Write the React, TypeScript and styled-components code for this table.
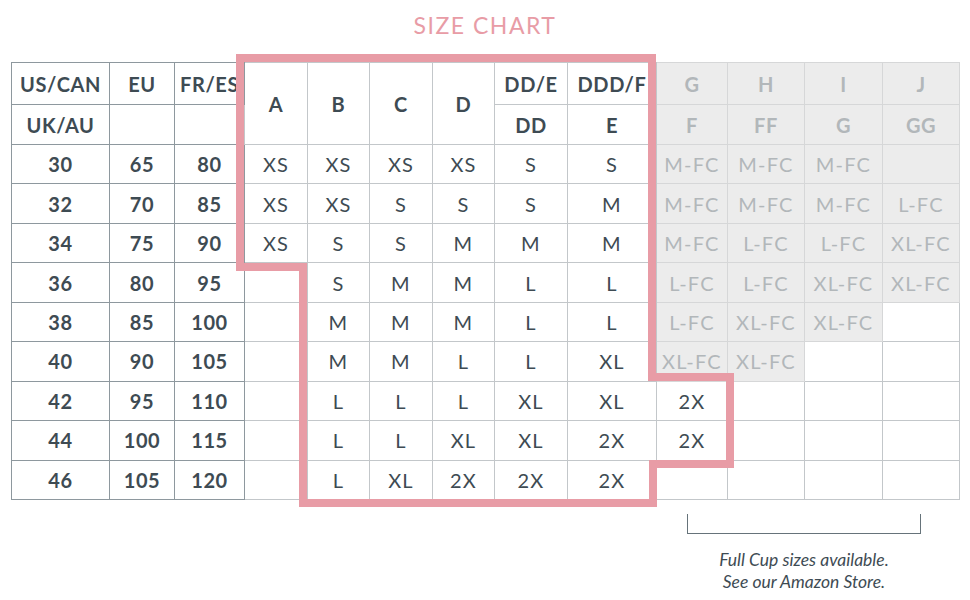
import React from "react";
import styled, { createGlobalStyle } from "styled-components";

const GlobalStyle = createGlobalStyle`
  html, body {
    margin: 0;
    padding: 0;
    background: #ffffff;
    font-family: "Lato", "Noto Sans", sans-serif;
    color: #3e4b53;
  }
`;

type Tone = "key" | "cup" | "full" | "blank";

const widths = [98, 65, 70, 63, 62, 63, 62, 73, 89, 71, 77, 78, 77];

const head1 = ["US/CAN", "EU", "FR/ES"];
const cupHead = ["A", "B", "C", "D"];
const head1b = ["DD/E", "DDD/F"];
const head2b = ["DD", "E"];
const fullHead1 = ["G", "H", "I", "J"];
const fullHead2 = ["F", "FF", "G", "GG"];

// band, eu, fr, A..DDD/F, G..J, and how many full cup cells are shaded
const rows: { key: string[]; cup: string[]; full: string[]; shaded: number }[] = [
  { key: ["30", "65", "80"], cup: ["XS", "XS", "XS", "XS", "S", "S"], full: ["M-FC", "M-FC", "M-FC", ""], shaded: 4 },
  { key: ["32", "70", "85"], cup: ["XS", "XS", "S", "S", "S", "M"], full: ["M-FC", "M-FC", "M-FC", "L-FC"], shaded: 4 },
  { key: ["34", "75", "90"], cup: ["XS", "S", "S", "M", "M", "M"], full: ["M-FC", "L-FC", "L-FC", "XL-FC"], shaded: 4 },
  { key: ["36", "80", "95"], cup: ["", "S", "M", "M", "L", "L"], full: ["L-FC", "L-FC", "XL-FC", "XL-FC"], shaded: 4 },
  { key: ["38", "85", "100"], cup: ["", "M", "M", "M", "L", "L"], full: ["L-FC", "XL-FC", "XL-FC", ""], shaded: 3 },
  { key: ["40", "90", "105"], cup: ["", "M", "M", "L", "L", "XL"], full: ["XL-FC", "XL-FC", "", ""], shaded: 2 },
  { key: ["42", "95", "110"], cup: ["", "L", "L", "L", "XL", "XL"], full: ["2X", "", "", ""], shaded: 0 },
  { key: ["44", "100", "115"], cup: ["", "L", "L", "XL", "XL", "2X"], full: ["2X", "", "", ""], shaded: 0 },
  { key: ["46", "105", "120"], cup: ["", "L", "XL", "2X", "2X", "2X"], full: ["", "", "", ""], shaded: 0 },
];

const App = () => {
  return (
    <Page>
      <GlobalStyle />
      <Title>Size Chart</Title>
      <ChartWrap>
        <Chart>
          <colgroup>
            {widths.map((w, i) => (
              <col key={i} style={{ width: w }} />
            ))}
          </colgroup>
          <thead>
            <HeadRow $h={42}>
              {head1.map((t) => (
                <HeadCell key={t} $tone="key">{t}</HeadCell>
              ))}
              {cupHead.map((t) => (
                <HeadCell key={t} $tone="cup" rowSpan={2}>{t}</HeadCell>
              ))}
              {head1b.map((t) => (
                <HeadCell key={t} $tone="cup">{t}</HeadCell>
              ))}
              {fullHead1.map((t) => (
                <HeadCell key={t} $tone="full">{t}</HeadCell>
              ))}
            </HeadRow>
            <HeadRow $h={40}>
              <HeadCell $tone="key">UK/AU</HeadCell>
              <HeadCell $tone="key" />
              <HeadCell $tone="key" />
              {head2b.map((t) => (
                <HeadCell key={t} $tone="cup">{t}</HeadCell>
              ))}
              {fullHead2.map((t, i) => (
                <HeadCell key={i} $tone="full">{t}</HeadCell>
              ))}
            </HeadRow>
          </thead>
          <tbody>
            {rows.map((r) => (
              <BodyRow key={r.key[0]}>
                {r.key.map((t, i) => (
                  <KeyCell key={i}>{t}</KeyCell>
                ))}
                {r.cup.map((t, i) => (
                  <SizeCell key={i} $tone="cup">{t}</SizeCell>
                ))}
                {r.full.map((t, i) => (
                  <SizeCell key={i} $tone={i < r.shaded ? "full" : t ? "cup" : "blank"}>
                    {t}
                  </SizeCell>
                ))}
              </BodyRow>
            ))}
          </tbody>
        </Chart>
        <Outline width="948" height="437" viewBox="0 0 948 437">
          <polygon
            points="229,-4 641,-4 641,315 719,315 719,402 642,402 642,441 292,441 292,205 229,205"
            fill="none"
            stroke="#e89ca6"
            strokeWidth="8"
            strokeLinejoin="miter"
          />
        </Outline>
      </ChartWrap>
      <NoteRow>
        <Note>
          <Bracket />
          <NoteText>
            Full Cup sizes available.
            <br />
            See our Amazon Store.
          </NoteText>
        </Note>
      </NoteRow>
    </Page>
  );
};

export default App;

const Page = styled.div`
  width: 970px;
  height: 600px;
  padding: 0 11px;
  box-sizing: border-box;
  overflow: hidden;
`;

const Title = styled.h1`
  margin: 0;
  height: 62px;
  padding-top: 11px;
  box-sizing: border-box;
  text-align: center;
  text-transform: uppercase;
  font-family: "Lato", sans-serif;
  font-weight: 400;
  font-size: 23px;
  letter-spacing: 1.5px;
  line-height: 28px;
  color: #e89ca6;
`;

const ChartWrap = styled.div`
  position: relative;
  width: 948px;
`;

const Chart = styled.table`
  width: 948px;
  table-layout: fixed;
  border-collapse: collapse;
  border: 1px solid #9aa1a6;
`;

const HeadRow = styled.tr<{ $h: number }>`
  height: ${(p) => p.$h}px;
`;

const BodyRow = styled.tr`
  height: 39.44px;
`;

const borderFor = (tone: Tone) =>
  tone === "key" ? "#8e989e" : tone === "full" ? "#d6d7d8" : "#c3c7ca";

const HeadCell = styled.th<{ $tone: Tone }>`
  padding: 0;
  text-align: center;
  vertical-align: middle;
  white-space: nowrap;
  overflow: hidden;
  font-weight: 700;
  font-size: 20px;
  letter-spacing: 0.6px;
  color: ${(p) => (p.$tone === "full" ? "#b2b7ba" : "#3e4b53")};
  background: ${(p) => (p.$tone === "full" ? "#ececec" : "#ffffff")};
  border: 1px solid ${(p) => borderFor(p.$tone)};
`;

const KeyCell = styled.td`
  padding: 0;
  text-align: center;
  vertical-align: middle;
  font-weight: 700;
  font-size: 20px;
  letter-spacing: 0.6px;
  color: #3e4b53;
  border: 1px solid #8e989e;
  border-top-color: #c3c7ca;
`;

const SizeCell = styled.td<{ $tone: Tone }>`
  padding: 0;
  text-align: center;
  vertical-align: middle;
  white-space: nowrap;
  font-weight: 400;
  font-size: 20px;
  letter-spacing: 1.2px;
  color: ${(p) => (p.$tone === "full" ? "#b2b7ba" : "#3e4b53")};
  background: ${(p) => (p.$tone === "full" ? "#ececec" : "#ffffff")};
  border: 1px solid ${(p) => borderFor(p.$tone)};
`;

const Outline = styled.svg`
  position: absolute;
  left: 0;
  top: 0;
  overflow: visible;
  pointer-events: none;
`;

const NoteRow = styled.div`
  display: flex;
  padding-left: 676px;
  margin-top: 14px;
`;

const Note = styled.div`
  width: 234px;
  display: flex;
  flex-direction: column;
  align-items: center;
`;

const Bracket = styled.div`
  width: 100%;
  height: 20px;
  box-sizing: border-box;
  border: 1.5px solid #66737a;
  border-top: none;
`;

const NoteText = styled.p`
  margin: 15px 0 0;
  text-align: center;
  font-style: italic;
  font-size: 17.5px;
  line-height: 22px;
  color: #3e4b53;
  white-space: nowrap;
`;
